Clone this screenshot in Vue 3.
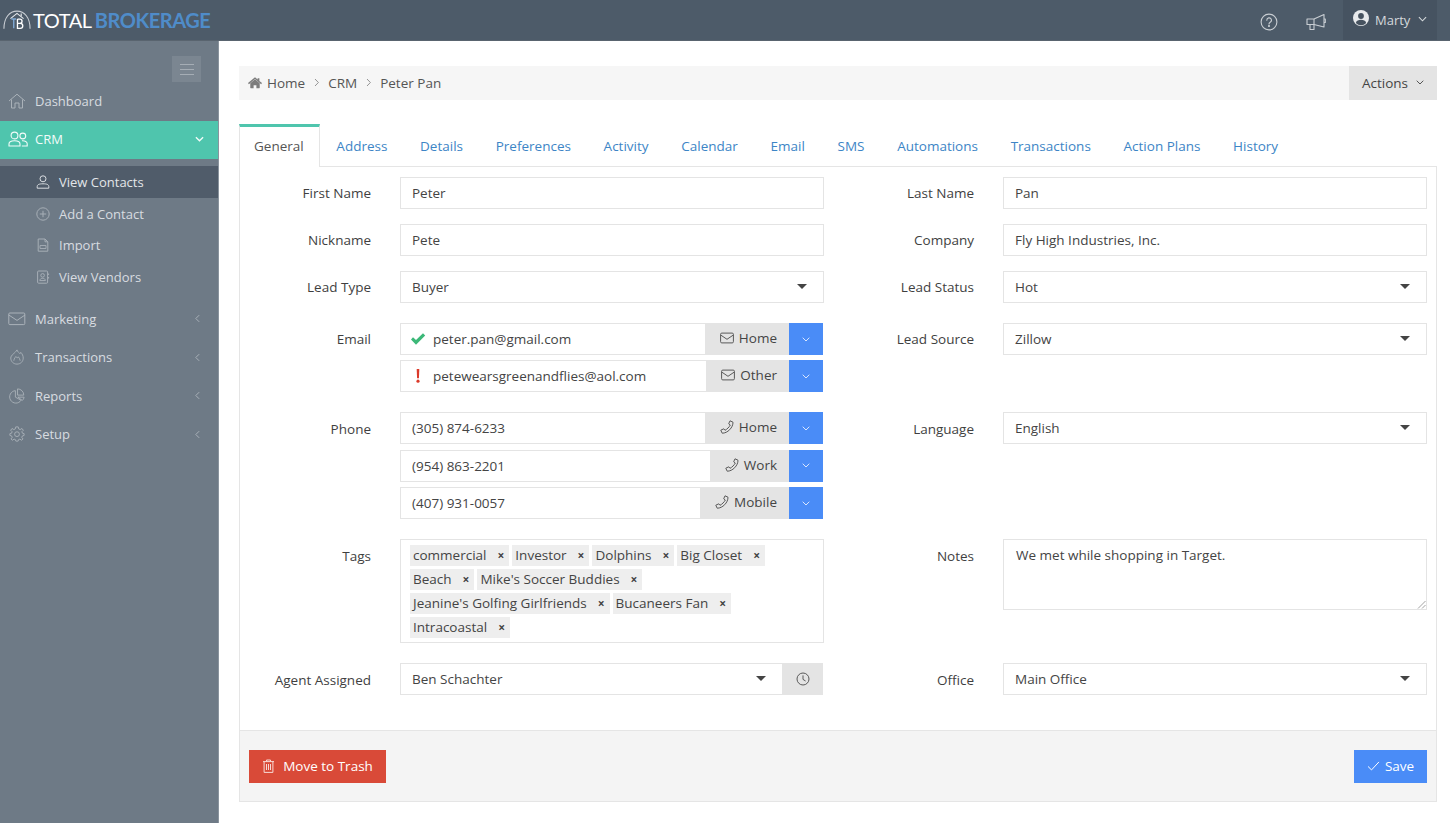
<script setup>
const subItems = [
  { label: 'View Contacts', icon: 'user', active: true },
  { label: 'Add a Contact', icon: 'plus' },
  { label: 'Import', icon: 'csv' },
  { label: 'View Vendors', icon: 'book' }
]
const lowerItems = [
  { label: 'Marketing', icon: 'mail' },
  { label: 'Transactions', icon: 'fire' },
  { label: 'Reports', icon: 'pie' },
  { label: 'Setup', icon: 'cog' }
]
const tabs = ['General', 'Address', 'Details', 'Preferences', 'Activity', 'Calendar', 'Email', 'SMS', 'Automations', 'Transactions', 'Action Plans', 'History']
const emails = [
  { value: 'peter.pan@gmail.com', kind: 'Home', status: 'ok' },
  { value: 'petewearsgreenandflies@aol.com', kind: 'Other', status: 'bad' }
]
const phones = [
  { value: '(305) 874-6233', kind: 'Home' },
  { value: '(954) 863-2201', kind: 'Work' },
  { value: '(407) 931-0057', kind: 'Mobile' }
]
const tags = ['commercial', 'Investor', 'Dolphins', 'Big Closet', 'Beach', "Mike's Soccer Buddies", "Jeanine's Golfing Girlfriends", 'Bucaneers Fan', 'Intracoastal']
</script>

<template>
  <div class="app">
    <header class="topbar">
      <div class="logo">
        <svg class="logo-mark" viewBox="0 0 30 22" fill="none">
          <path d="M1 21 C1 9 7 2 15 2 C23 2 29 9 29 21" stroke="#c9ced4" stroke-width="1.2" />
          <path d="M8 10 L15 4.5 L22 10" stroke="#e6e9ec" stroke-width="1.2" />
          <path d="M19.5 4.5 v3" stroke="#e6e9ec" stroke-width="1.2" />
          <path d="M9 10.5 h5 M11.5 10.5 v10" stroke="#7fa9d4" stroke-width="1.5" />
          <path d="M15.5 10.5 v10 h3 a2.6 2.6 0 0 0 0 -5.4 h-3 m0 0 h2.6 a2.3 2.3 0 0 0 0 -4.6 h-2.6" stroke="#ffffff" stroke-width="1.4" />
        </svg>
        <span class="logo-a">TOTAL</span><span class="logo-b">BROKERAGE</span>
      </div>
      <div class="top-actions">
        <svg class="top-icon" viewBox="0 0 18 18" fill="none" stroke="#c9ced3" stroke-width="1.1">
          <circle cx="9" cy="9" r="7.9" />
          <path d="M6.8 7.2 a2.3 2.3 0 1 1 3.4 2 c-.8.5 -1.2.9 -1.2 1.8" stroke-linecap="round" />
          <circle cx="9" cy="13" r=".5" fill="#c9ced3" />
        </svg>
        <svg class="top-icon mega" viewBox="0 0 20 18" fill="none" stroke="#c9ced3" stroke-width="1.1" stroke-linejoin="round">
          <path d="M1 6 h7 L18 1.5 V14 L8 11.5 H1 Z" />
          <path d="M4 11.5 V16.5 H8 V11.5" />
          <path d="M18 6 h1.3 v3.5 H18" />
          <path d="M8 6 v5.5" />
        </svg>
        <div class="user-menu">
          <svg class="user-icon" viewBox="0 0 16 16">
            <circle cx="8" cy="8" r="8" fill="#e8eaec" />
            <circle cx="8" cy="6" r="2.9" fill="#46525f" />
            <path d="M2.8 13 C3.5 10.4 5.5 9.8 8 9.8 C10.5 9.8 12.5 10.4 13.2 13 A7 7 0 0 1 2.8 13 Z" fill="#46525f" />
          </svg>
          <span>Marty</span>
          <svg class="chev-sm" viewBox="0 0 10 6" fill="none" stroke="#d5d9dc" stroke-width="1.2"><path d="M1 1 L5 5 L9 1" /></svg>
        </div>
      </div>
    </header>

    <div class="body">
      <aside class="sidebar">
        <div class="burger-wrap">
          <button class="burger" type="button" aria-label="Toggle menu"><i></i><i></i><i></i></button>
        </div>

        <a class="nav-item">
          <svg class="nav-icon" viewBox="0 0 18 16" fill="none" stroke="currentColor" stroke-width="1"><path d="M1 8 L9 1.2 L17 8" /><path d="M3.5 6.5 V15 H7 V10 H11 V15 H14.5 V6.5" /></svg>
          <span>Dashboard</span>
        </a>
        <a class="nav-item open">
          <svg class="nav-icon" viewBox="0 0 20 16" fill="none" stroke="currentColor" stroke-width="1.1"><circle cx="6.5" cy="4.5" r="3.4" /><path d="M1 15 V13 C1 10.6 3 9.8 6.5 9.8 C10 9.8 12 10.6 12 13 V15 Z" /><circle cx="14.8" cy="5" r="2.9" /><path d="M14 9.8 C17 9.6 19.2 10.6 19.2 12.8 V15 H13.8" /></svg>
          <span>CRM</span>
          <svg class="nav-chev down" viewBox="0 0 10 6" fill="none" stroke="currentColor" stroke-width="1.5"><path d="M1 1 L5 5 L9 1" /></svg>
        </a>
        <ul class="submenu">
          <li v-for="item in subItems" :key="item.label" :class="{ active: item.active }">
            <svg v-if="item.icon === 'user'" class="sub-icon" viewBox="0 0 14 14" fill="none" stroke="currentColor" stroke-width="1"><circle cx="7" cy="3.8" r="3" /><path d="M1.2 13.2 V11.6 C1.2 9.6 3 8.8 7 8.8 C11 8.8 12.8 9.6 12.8 11.6 V13.2 Z" /></svg>
            <svg v-else-if="item.icon === 'plus'" class="sub-icon" viewBox="0 0 14 14" fill="none" stroke="currentColor" stroke-width="1"><circle cx="7" cy="7" r="6.2" /><path d="M7 3.8 V10.2 M3.8 7 H10.2" /></svg>
            <svg v-else-if="item.icon === 'csv'" class="sub-icon" viewBox="0 0 14 14" fill="none" stroke="currentColor" stroke-width="1"><path d="M2.2 1 H9 L11.8 3.8 V13.2 H2.2 Z" /><path d="M9 1 V3.8 H11.8" /><path d="M4 7.5 H10 V10.5 H4 Z" stroke-width=".9" /></svg>
            <svg v-else class="sub-icon" viewBox="0 0 14 14" fill="none" stroke="currentColor" stroke-width="1"><rect x="1.6" y="1" width="10" height="12.2" rx="1" /><circle cx="6.6" cy="5.4" r="1.8" /><path d="M3.8 10.6 C4 8.9 5 8.4 6.6 8.4 C8.2 8.4 9.2 8.9 9.4 10.6 Z" /><path d="M12.6 3.5 V5 M12.6 7 V8.5" /></svg>
            <span>{{ item.label }}</span>
          </li>
        </ul>
        <a v-for="item in lowerItems" :key="item.label" class="nav-item">
          <svg v-if="item.icon === 'mail'" class="nav-icon" viewBox="0 0 18 14" fill="none" stroke="currentColor" stroke-width="1"><rect x=".8" y="1" width="16" height="11.6" rx="1" /><path d="M.8 3 L9 8.4 L17 3" /></svg>
          <svg v-else-if="item.icon === 'fire'" class="nav-icon" viewBox="0 0 18 18" fill="none" stroke="currentColor" stroke-width="1"><path d="M9 1 C9.5 3.5 11.5 3.8 12.3 5.3 C12.8 4.8 13 4.4 13.2 3.8 C15 5.5 16 7.8 16 10.2 C16 14 13 17 9 17 C5 17 2 14 2 10.2 C2 6.5 6.8 5 9 1 Z" /><path d="M5.4 13.2 C5.8 10.5 7 9.5 7.7 8.5 C8.3 9.5 9 10 9.7 9.8 C10 9.5 10.3 9.2 10.5 8.8 C11.6 10 12.4 11.6 12.6 13.2" /></svg>
          <svg v-else-if="item.icon === 'pie'" class="nav-icon" viewBox="0 0 18 18" fill="none" stroke="currentColor" stroke-width="1"><path d="M7.2 3 A7 7 0 1 0 13.6 13.8 L7.2 10.3 Z" /><path d="M9.6 1 A7 7 0 0 1 16.6 8 H9.6 Z" /><path d="M10 10.3 H17 A6 6 0 0 1 15 14 Z" /></svg>
          <svg v-else class="nav-icon" viewBox="0 0 18 18" fill="none" stroke="currentColor" stroke-width="1"><path d="M7.6 1 H10.4 L10.9 3.3 L12.6 4 L14.6 2.8 L16.1 4.8 L14.5 6.4 L15 8 L17 8.6 V10.6 L15 11.2 L14.4 12.8 L15.8 14.6 L14 16 L12.3 14.7 L10.8 15.3 L10.3 17 H7.7 L7.2 15.3 L5.7 14.7 L4 16 L2.2 14.6 L3.6 12.8 L3 11.2 L1 10.6 V8.6 L3 8 L3.5 6.4 L1.9 4.8 L3.4 2.8 L5.4 4 L7.1 3.3 Z" /><circle cx="9" cy="9.2" r="2.7" /></svg>
          <span>{{ item.label }}</span>
          <svg class="nav-chev" viewBox="0 0 6 10" fill="none" stroke="currentColor" stroke-width="1.2"><path d="M5 1 L1 5 L5 9" /></svg>
        </a>
      </aside>

      <main class="main">
        <div class="crumbs">
          <div class="crumb-list">
            <svg class="crumb-home" viewBox="0 0 16 13" fill="#7c7c7c"><path d="M8 2.2 L2.6 6.8 V12 a.5 .5 0 0 0 .5 .5 H6.4 V9 H9.6 V12.5 H12.9 a.5 .5 0 0 0 .5 -.5 V6.8 Z" /><path d="M8 0 L0 6.6 L1 7.8 L8 2 L15 7.8 L16 6.6 L13 4.1 V1 H11 V2.5 Z" /></svg>
            <span>Home</span>
            <svg class="crumb-sep" viewBox="0 0 5 9" fill="none" stroke="#8a8a8a" stroke-width=".9"><path d="M1 1 L4.4 4.5 L1 8" /></svg>
            <span>CRM</span>
            <svg class="crumb-sep" viewBox="0 0 5 9" fill="none" stroke="#8a8a8a" stroke-width=".9"><path d="M1 1 L4.4 4.5 L1 8" /></svg>
            <span>Peter Pan</span>
          </div>
          <button class="actions" type="button">
            Actions
            <svg class="chev-xs" viewBox="0 0 8 5" fill="none" stroke="#555" stroke-width="1"><path d="M.7 .7 L4 4 L7.3 .7" /></svg>
          </button>
        </div>

        <nav class="tabs">
          <a v-for="(tab, i) in tabs" :key="tab" class="tab" :class="{ current: i === 0 }">{{ tab }}</a>
        </nav>

        <section class="panel">
          <div class="form">
            <label class="lbl">First Name</label>
            <div class="field">Peter</div>
            <label class="lbl">Last Name</label>
            <div class="field">Pan</div>

            <label class="lbl">Nickname</label>
            <div class="field">Pete</div>
            <label class="lbl">Company</label>
            <div class="field">Fly High Industries, Inc.</div>

            <label class="lbl">Lead Type</label>
            <div class="field select">Buyer<i class="caret"></i></div>
            <label class="lbl">Lead Status</label>
            <div class="field select">Hot<i class="caret"></i></div>

            <label class="lbl gap-top">Email</label>
            <div class="stack tight gap-top">
              <div v-for="e in emails" :key="e.value" class="group">
                <div class="field grow with-status">
                  <svg v-if="e.status === 'ok'" class="st" viewBox="0 0 16 13" fill="#3cb878"><path d="M1 7 L3 4.8 L6 7.6 L13 .8 L15.2 3 L6 12.2 Z" /></svg>
                  <svg v-else class="st" viewBox="0 0 16 15" fill="#db3a2a"><path d="M6.6 0 H9.4 L9 10 H7 Z" /><circle cx="8" cy="13" r="1.7" /></svg>
                  <span>{{ e.value }}</span>
                </div>
                <div class="addon">
                  <svg class="add-icon" viewBox="0 0 14 11" fill="none" stroke="#5a5a5a" stroke-width="1"><rect x=".6" y=".6" width="12.8" height="9.8" rx="1.2" /><path d="M.8 2.6 L7 6.8 L13.2 2.6" /></svg>
                  {{ e.kind }}
                </div>
                <div class="blue-btn"><svg viewBox="0 0 8 5" fill="none" stroke="#d9e6fd" stroke-width="1"><path d="M.7 .7 L4 4 L7.3 .7" /></svg></div>
              </div>
            </div>
            <label class="lbl gap-top">Lead Source</label>
            <div class="field select gap-top">Zillow<i class="caret"></i></div>

            <label class="lbl gap-top low">Phone</label>
            <div class="stack gap-top">
              <div v-for="p in phones" :key="p.value" class="group">
                <div class="field grow">{{ p.value }}</div>
                <div class="addon">
                  <svg class="add-icon" viewBox="0 0 14 14" fill="none" stroke="#5a5a5a" stroke-width="1"><path d="M10 .8 L13 2.2 C13.2 7.5 7.5 13.3 2.2 13.2 L.8 10.2 L3.8 8.8 L5 10.3 C6.8 9.5 9.5 6.8 10.3 5 L8.7 3.8 Z" /></svg>
                  {{ p.kind }}
                </div>
                <div class="blue-btn"><svg viewBox="0 0 8 5" fill="none" stroke="#d9e6fd" stroke-width="1"><path d="M.7 .7 L4 4 L7.3 .7" /></svg></div>
              </div>
            </div>
            <label class="lbl gap-top low">Language</label>
            <div class="field select gap-top">English<i class="caret"></i></div>

            <label class="lbl gap-top low">Tags</label>
            <div class="tags gap-top">
              <span v-for="t in tags" :key="t" class="tag">{{ t }}<b class="x">×</b></span>
            </div>
            <label class="lbl gap-top low">Notes</label>
            <div class="notes gap-top">
              We met while shopping in Target.
              <svg class="grip" viewBox="0 0 9 9" fill="none" stroke="#8a8a8a" stroke-width=".8"><path d="M1 8.5 L8.5 1 M5 8.5 L8.5 5" /></svg>
            </div>

            <label class="lbl gap-top low">Agent Assigned</label>
            <div class="group gap-top">
              <div class="field select grow">Ben Schachter<i class="caret"></i></div>
              <div class="clock">
                <svg viewBox="0 0 14 14" fill="none" stroke="#5a5a5a" stroke-width="1"><circle cx="7" cy="7" r="6" /><path d="M7 3.4 V7.4 L9.6 9" /></svg>
              </div>
            </div>
            <label class="lbl gap-top low">Office</label>
            <div class="field select gap-top">Main Office<i class="caret"></i></div>
          </div>

          <footer class="foot">
            <button class="btn red" type="button">
              <svg viewBox="0 0 12 14" fill="none" stroke="#f7d9d5" stroke-width="1"><path d="M.5 2.6 H11.5 M4 2.4 V1 H8 V2.4" /><path d="M1.6 2.6 V13.4 H10.4 V2.6" /><path d="M4 5 V11 M6 5 V11 M8 5 V11" /></svg>
              Move to Trash
            </button>
            <button class="btn blue" type="button">
              <svg viewBox="0 0 14 11" fill="none" stroke="#ffffff" stroke-width="1.1"><path d="M1 6 L4.8 9.8 L13 1" /></svg>
              Save
            </button>
          </footer>
        </section>
      </main>
    </div>
  </div>
</template>

<style>
html, body { margin: 0; background: #fff; }
</style>

<style scoped>
.app {
  height: 100vh;
  overflow: hidden;
  display: flex;
  flex-direction: column;
  font-family: "Open Sans", "Liberation Sans", sans-serif;
  font-size: 13.5px;
  color: #444;
}
.topbar {
  height: 41px;
  flex: none;
  display: flex;
  justify-content: space-between;
  background: #4d5b69;
  border-bottom: 1px solid #59646f;
  box-sizing: border-box;
}
.logo { display: flex; align-items: center; padding-left: 3px; height: 40px; font-family: Lato, sans-serif; font-size: 20px; letter-spacing: -.42px; }
.logo-mark { width: 28px; height: 21px; margin-right: 2px; margin-top: -2px; }
.logo-a { color: #fff; margin-right: 3px; margin-top: -1px; }
.logo-b { color: #4f8cc9; font-weight: 700; margin-top: -1px; }
.top-actions { display: flex; align-items: center; padding-right: 13px; }
.top-icon { width: 18px; height: 18px; margin-right: 28px; margin-top: 3px; }
.mega { width: 20px; height: 18px; margin-right: 17px; }
.user-menu {
  width: 94px;
  height: 40px;
  box-sizing: border-box;
  background: #465361;
  display: flex;
  align-items: center;
  padding-left: 10px;
  color: #d5d9dc;
  font-size: 13px;
}
.user-icon { width: 16px; height: 16px; margin-right: 6px; margin-top: -4px; }
.chev-sm { width: 9px; height: 6px; margin-left: 8px; margin-top: -3px; }

.body { flex: 1; display: flex; min-height: 0; }
.sidebar { width: 219px; flex: none; background: #6e7a86; color: #d8dce0; border-right: 1px solid #8a949e; box-sizing: border-box; font-size: 13px; }
.burger-wrap { height: 41px; display: flex; justify-content: flex-end; padding: 15px 17px 0 0; box-sizing: border-box; }
.burger { width: 29px; height: 26px; padding: 0; border: 0; background: #7b8691; display: flex; flex-direction: column; justify-content: center; align-items: center; gap: 4px; }
.burger i { display: block; width: 14px; height: 1px; background: #a5adb5; }
.nav-item { height: 38.5px; box-sizing: border-box; padding-bottom: 1px; display: flex; align-items: center; position: relative; color: #d8dce0; }
.nav-item.open { background: #4fc5ad; color: #f2fbf9; }
.nav-icon { position: absolute; left: 8px; width: 18px; height: 16px; color: #aab2b9; }
.nav-item.open .nav-icon { color: #f2fbf9; width: 20px; }
.nav-item span { margin-left: 35px; }
.nav-chev { position: absolute; right: 18px; width: 5px; height: 9px; color: #a9b1b8; }
.nav-chev.down { width: 9px; height: 6px; right: 14px; color: #f2fbf9; }
.submenu { list-style: none; margin: 0; padding: 7px 0; }
.submenu li { height: 31.75px; box-sizing: border-box; display: flex; align-items: center; position: relative; color: #d8dce0; }
.submenu li.active { background: #505c6a; color: #e3e6e9; }
.sub-icon { position: absolute; left: 36px; width: 14px; height: 14px; color: #a6aeb6; }
.active .sub-icon { color: #d8dce0; }
.submenu span { margin-left: 59px; }

.main { flex: 1; min-width: 0; padding: 25px 13px 0 20px; }
.crumbs { height: 34px; background: #f6f6f6; display: flex; justify-content: space-between; align-items: stretch; }
.crumb-list { display: flex; align-items: center; padding: 0 0 1px 9px; color: #555; }
.crumb-home { width: 14px; height: 12px; margin-right: 5px; }
.crumb-sep { width: 5px; height: 9px; margin: 0 9px; }
.actions { width: 88px; border: 0; background: #e4e4e4; color: #444; font: inherit; padding: 0 0 1px; display: flex; align-items: center; justify-content: center; gap: 8px; }
.chev-xs { width: 8px; height: 5px; }

.tabs { display: flex; margin-top: 24px; height: 42px; }
.tab { display: flex; align-items: center; padding: 0 16.35px 2px; color: #3d85c6; box-sizing: border-box; margin-top: 3px; }
.tab.current { margin-top: 0; width: 81px; padding: 0 14px 2px; color: #555; background: #fff; border: 1px solid #e5e5e5; border-top: 3px solid #4fc5ad; border-bottom: 0; position: relative; z-index: 1; height: 43px; }

.panel { border: 1px solid #e5e5e5; height: 636px; box-sizing: border-box; display: flex; flex-direction: column; justify-content: space-between; }
.form { display: grid; grid-template-columns: 160px 424px 179px 424px; row-gap: 15px; padding-top: 10px; align-items: start; }
.lbl { text-align: right; padding: 6px 29px 0 0; color: #3f3f3f; line-height: 20px; }
.lbl.low { padding-top: 7px; }
.field {
  height: 32px;
  box-sizing: border-box;
  border: 1px solid #e4e4e4;
  display: flex;
  align-items: center;
  padding: 0 11px;
  color: #444;
  background: #fff;
  position: relative;
}
.select { padding-bottom: 1px; }
.gap-top { margin-top: 5px; }
.caret { position: absolute; right: 16px; top: 12px; border-left: 5px solid transparent; border-right: 5px solid transparent; border-top: 5px solid #444; }
.stack { display: flex; flex-direction: column; gap: 5.5px; width: 423px; }
.stack.tight { gap: 5px; }
.group { display: flex; width: 423px; height: 32px; }
.grow { flex: 1; min-width: 0; }
.with-status { padding-left: 9px; }
.st { width: 16px; height: 14px; margin-right: 7px; flex: none; }
.addon { background: #e4e4e4; display: flex; align-items: center; gap: 5px; padding: 0 12px 2px 14px; color: #444; }
.add-icon { width: 14px; height: 14px; }
.blue-btn { width: 34px; background: #4a8cf7; display: flex; align-items: center; justify-content: center; }
.blue-btn svg { width: 8px; height: 5px; }
.tags {
  width: 424px;
  height: 104px;
  box-sizing: border-box;
  border: 1px solid #e4e4e4;
  padding: 5px 9px;
  display: flex;
  flex-wrap: wrap;
  align-content: flex-start;
  gap: 3px;
}
.tag { height: 21px; line-height: 20px; background: #eee; padding: 0 5px 0 3px; color: #444; white-space: nowrap; }
.x { font-size: 12px; margin-left: 11px; color: #444; font-weight: 700; }
.notes { height: 71px; box-sizing: border-box; border: 1px solid #e4e4e4; padding: 5px 12px; position: relative; color: #444; line-height: 20px; }
.grip { position: absolute; right: 0; bottom: 0; width: 9px; height: 9px; }
.clock { width: 40px; background: #e4e4e4; display: flex; align-items: center; justify-content: center; }
.clock svg { width: 14px; height: 14px; }

.foot { height: 71px; box-sizing: border-box; background: #f4f4f4; border-top: 1px solid #e5e5e5; display: flex; justify-content: space-between; align-items: flex-start; padding: 19px 9px 0; }
.btn { height: 33px; border: 0; color: #fff; font: inherit; display: flex; align-items: center; padding: 0 0 2px; justify-content: center; }
.btn svg { margin-right: 5px; }
.red { width: 137px; background: #d94a38; }
.red svg { width: 13px; height: 14px; margin-right: 8px; }
.blue { width: 73px; background: #4a8cf7; }
.blue svg { width: 13px; height: 10px; }
</style>
